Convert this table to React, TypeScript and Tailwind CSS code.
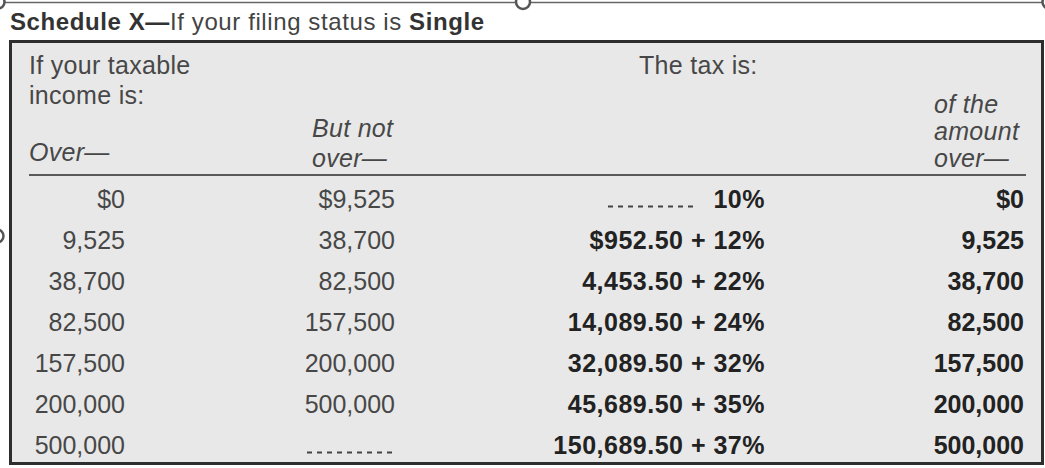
const rows = [
  { over: "$0", notOver: "$9,525", base: "", rate: "10%", of: "$0" },
  { over: "9,525", notOver: "38,700", base: "$952.50", rate: "12%", of: "9,525" },
  { over: "38,700", notOver: "82,500", base: "4,453.50", rate: "22%", of: "38,700" },
  { over: "82,500", notOver: "157,500", base: "14,089.50", rate: "24%", of: "82,500" },
  { over: "157,500", notOver: "200,000", base: "32,089.50", rate: "32%", of: "157,500" },
  { over: "200,000", notOver: "500,000", base: "45,689.50", rate: "35%", of: "200,000" },
  { over: "500,000", notOver: "", base: "150,689.50", rate: "37%", of: "500,000" },
];

const cols = "grid grid-cols-[96px_271px_369px_259px]";

function Leader() {
  return (
    <svg width="88" height="3" className="inline-block align-baseline">
      <line x1="0" y1="1.5" x2="88" y2="1.5" stroke="#444" strokeWidth="2" strokeDasharray="5 5" />
    </svg>
  );
}

// crop-frame handles lying over the screenshot
function Handles() {
  return (
    <svg className="absolute inset-0 pointer-events-none" width="1045" height="468">
      <line x1="0" y1="2.5" x2="1045" y2="2.5" stroke="#666" strokeWidth="1.5" />
      <circle cx="-2" cy="2" r="6.5" fill="white" stroke="#555" strokeWidth="2.5" />
      <circle cx="523" cy="2" r="7" fill="white" stroke="#555" strokeWidth="2.5" />
      <circle cx="1049" cy="2" r="6.5" fill="white" stroke="#555" strokeWidth="2.5" />
      <circle cx="-3" cy="236" r="6.5" fill="white" stroke="#555" strokeWidth="2.5" />
    </svg>
  );
}

export default function App() {
  return (
    <div className="relative w-[1045px] h-[468px] bg-white overflow-hidden font-['Liberation_Sans',Arial,sans-serif]">
      <div className="h-[40px] pl-[10px] pt-[10px] text-[24px] leading-[24px] tracking-[0.6px] text-[#444]">
        <span className="font-bold text-[#333]">Schedule X—</span>
        If your filing status is <span className="font-bold text-[#333]">Single</span>
      </div>

      <div className="ml-[9px] w-[1035px] h-[425px] border-[3px] border-[#2e2e2e] bg-[#e8e8e8] pl-[17px] text-[25px] text-[#474747]">
        <div className={`${cols} grid-rows-[131px] tracking-[0.3px]`}>
          <div className="col-start-1 col-span-2 row-start-1 self-start pt-[7px] leading-[30px]">
            If your taxable
            <br />
            income is:
          </div>
          <div className="col-start-1 row-start-1 self-end pb-[8px] leading-[27px] italic">Over—</div>
          <div className="col-start-2 row-start-1 self-end pb-[1px] pl-[187px] leading-[30px] italic whitespace-nowrap">
            But not
            <br />
            over—
          </div>
          <div className="col-start-3 col-span-2 row-start-1 self-start pt-[7px] pl-[243px] leading-[30px]">
            The tax is:
          </div>
          <div className="col-start-4 row-start-1 self-end pb-[2px] pl-[169px] leading-[27px] italic whitespace-nowrap">
            of the
            <br />
            amount
            <br />
            over—
          </div>
        </div>

        <div className="w-[997px] h-[2px] bg-[#5a5a5a]" />

        <div className="mt-[3px]">
          {rows.map((r, i) => (
            <div
              key={r.over}
              className={`${cols} ${i === rows.length - 1 ? "h-[37px]" : "h-[41px]"} leading-[41px] text-right`}
            >
              <div>{r.over}</div>
              <div className="pr-[1px]">{r.notOver || <Leader />}</div>
              <div className="font-bold text-[#222] whitespace-nowrap tracking-[0.5px]">
                {r.base ? (
                  `${r.base} + ${r.rate}`
                ) : (
                  <>
                    <span className="mr-[17px]">
                      <Leader />
                    </span>
                    {r.rate}
                  </>
                )}
              </div>
              <div className="font-bold text-[#222]">{r.of}</div>
            </div>
          ))}
        </div>
      </div>

      <Handles />
    </div>
  );
}
